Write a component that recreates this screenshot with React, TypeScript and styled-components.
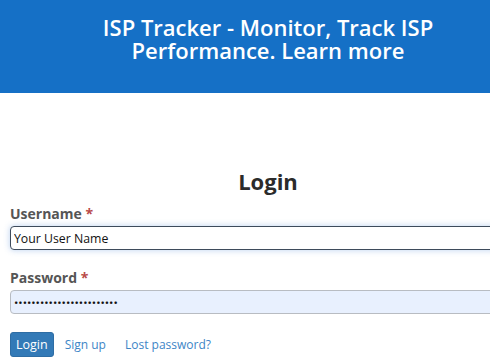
import React, { useState } from 'react';
import styled, { createGlobalStyle } from 'styled-components';

// Styled Components
const GlobalStyle = createGlobalStyle`
    html, body {
        margin: 0;
        padding: 0;
        background: #ffffff;
        overflow: hidden;
    }
    body {
        font-family: "Open Sans", "DejaVu Sans", sans-serif;
    }
`;

const Page = styled.div`
    width: 536px;
`;

const Banner = styled.header`
    height: 93px;
    background: #1570c6;
    box-sizing: border-box;
    padding-top: 16px;
`;

const BannerTitle = styled.h1`
    margin: 0 auto;
    max-width: 380px;
    text-align: center;
    color: #ffffff;
    font-size: 22px;
    font-weight: 600;
    line-height: 23px;
`;

const Form = styled.form`
    padding: 73px 10px 0;
`;

const Title = styled.h2`
    margin: 0 0 8px;
    text-align: center;
    color: #2b2b2b;
    font-size: 22px;
    font-weight: 700;
    line-height: 30px;
`;

const Field = styled.div`
    margin-bottom: 18px;
`;

const Label = styled.label`
    display: block;
    color: #555555;
    font-size: 14px;
    font-weight: 700;
    line-height: 19px;
    margin-bottom: 3px;
`;

const RequiredMark = styled.span`
    color: #b94a48;
`;

const Input = styled.input<{ $focused?: boolean; $autofill?: boolean }>`
    display: block;
    width: 100%;
    height: 24px;
    box-sizing: border-box;
    padding: 0 3px;
    font-family: "Open Sans", "DejaVu Sans", sans-serif;
    font-size: ${(p) => (p.$autofill ? '11.5px' : '12.3px')};
    color: #111111;
    border-radius: 4px;
    outline: none;
    border: 1px solid ${(p) => (p.$focused ? '#3e4b5b' : '#b8bcc2')};
    background: ${(p) => (p.$autofill ? '#e8f0fe' : '#ffffff')};
    box-shadow: ${(p) => (p.$focused ? '0 0 6px rgba(102, 150, 220, 0.45)' : 'none')};
`;

const Actions = styled.div`
    display: flex;
    align-items: center;
    gap: 11px;
    margin-top: 17px;
`;

const SubmitButton = styled.button`
    height: 25px;
    padding: 0 5px;
    background: #337ab7;
    border: 1px solid #2e6da4;
    border-radius: 3px;
    color: #ffffff;
    font-family: "Open Sans", "DejaVu Sans", sans-serif;
    font-size: 12.5px;
    cursor: pointer;
`;

const TextLink = styled.a`
    color: #3d85c6;
    font-size: 12px;
    text-decoration: none;
    margin-right: 8px;
`;

const App = () => {
    const [username, setUsername] = useState('Your User Name');
    const [password, setPassword] = useState('••••••••••••••••••••••••');

    return (
        <Page>
            <GlobalStyle />
            <Banner>
                <BannerTitle>ISP Tracker - Monitor, Track ISP Performance. Learn more</BannerTitle>
            </Banner>

            <Form onSubmit={(e) => e.preventDefault()}>
                <Title>Login</Title>

                <Field>
                    <Label htmlFor="username">
                        Username <RequiredMark>*</RequiredMark>
                    </Label>
                    <Input
                        id="username"
                        type="text"
                        value={username}
                        onChange={(e) => setUsername(e.target.value)}
                        $focused
                    />
                </Field>

                <Field>
                    <Label htmlFor="password">
                        Password <RequiredMark>*</RequiredMark>
                    </Label>
                    <Input
                        id="password"
                        type="text"
                        value={password}
                        onChange={(e) => setPassword(e.target.value)}
                        $autofill
                    />
                </Field>

                <Actions>
                    <SubmitButton type="submit">Login</SubmitButton>
                    <TextLink href="#">Sign up</TextLink>
                    <TextLink href="#">Lost password?</TextLink>
                </Actions>
            </Form>
        </Page>
    );
};

export default App;
